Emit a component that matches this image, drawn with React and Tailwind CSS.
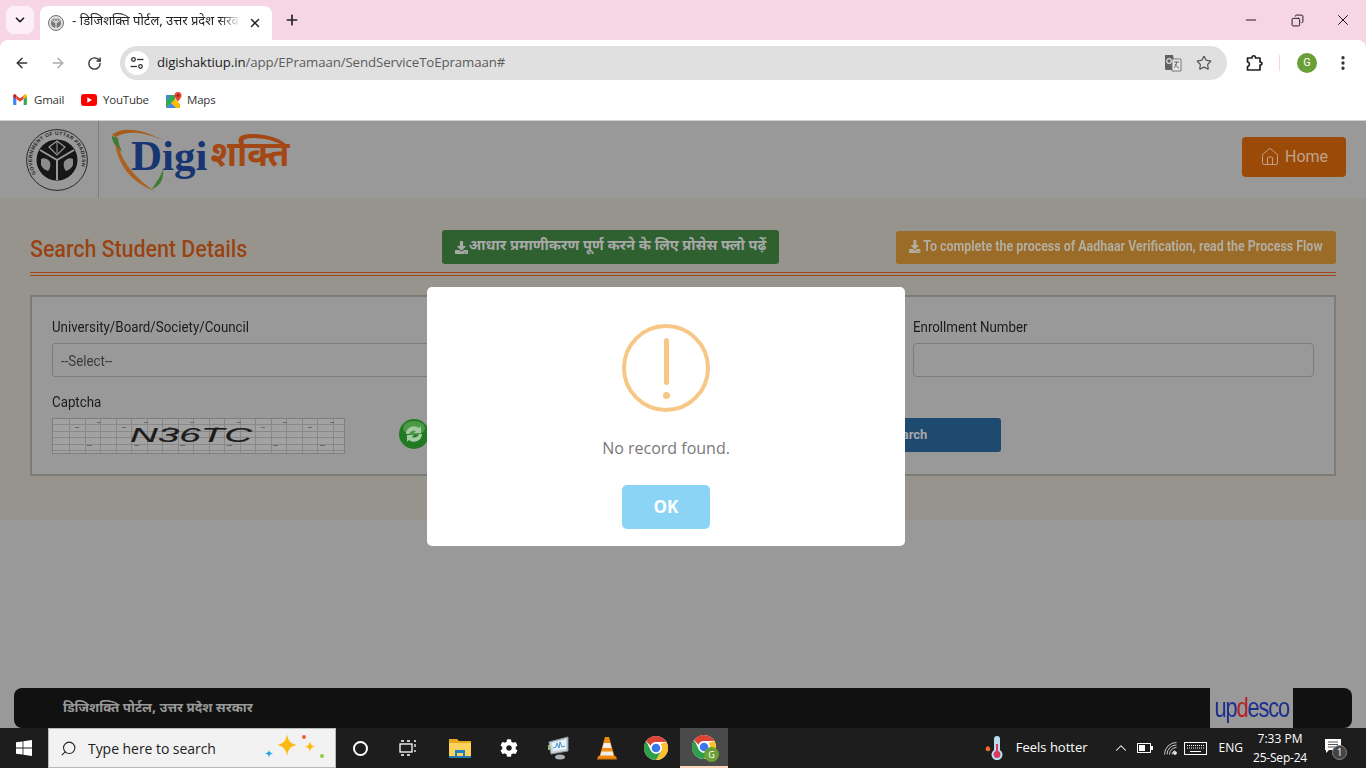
// App.jsx
import {
  ChevronDown, X, Plus, Minus, ArrowLeft, ArrowRight, RotateCw, Star,
  EllipsisVertical, Copy, Search, ChevronUp, House,
} from "lucide-react";
import { FaCog, FaDownload } from "react-icons/fa";

const HINDI = "font-['Noto_Sans_Devanagari','Lohit_Devanagari','Noto_Sans',sans-serif]";

function GmailIcon() {
  return (
    <svg width="14" height="11" viewBox="0 0 15 12">
      <path d="M0 2v9a1 1 0 0 0 1 1h2.500V5.500z" fill="#4285f4" />
      <path d="M15 2v9a1 1 0 0 1-1 1h-2.500V5.500z" fill="#34a853" />
      <path d="M3.500 5.500 7.500 8.500l4-3V1.500l-4 3-4-3z" fill="#ea4335" />
      <path d="M0 2c0-1.500 1.800-2.300 3-1.400l.5.400v4.500L0 3z" fill="#c5221f" />
      <path d="M15 2c0-1.500-1.800-2.300-3-1.400l-.5.400v4.500L15 3z" fill="#fbbc04" />
    </svg>
  );
}

function YoutubeIcon() {
  return (
    <svg width="16" height="12" viewBox="0 0 16 12">
      <rect width="16" height="12" rx="3" fill="#f00" />
      <path d="M6.300 3.200v5.600L11 6z" fill="#fff" />
    </svg>
  );
}

function MapsIcon() {
  return (
    <svg width="16" height="16" viewBox="0 0 16 16">
      <path d="M0 3h9v13H0z" fill="#34a853" />
      <path d="M0 16 9 7l5 5v4z" fill="#fbbc04" />
      <path d="M0 16 5 11l5 5z" fill="#4285f4" />
      <path d="M0 3h6L0 9z" fill="#4285f4" opacity=".7" />
      <path d="M12 0a3.500 3.500 0 0 0-3.500 3.500C8.500 6 12 9.500 12 9.500s3.500-3.500 3.500-6A3.500 3.500 0 0 0 12 0z" fill="#ea4335" />
      <circle cx="12" cy="3.500" r="1.200" fill="#8c1c13" />
    </svg>
  );
}

function ChromeIcon({ size = 24 }) {
  return (
    <svg width={size} height={size} viewBox="0 0 24 24">
      <circle cx="12" cy="12" r="12" fill="#fff" />
      <path d="M12 0a12 12 0 0 1 10.400 6H12a6 6 0 0 0-5.600 3.800L2.200 5A12 12 0 0 1 12 0z" fill="#db4437" />
      <path d="M22.400 6A12 12 0 0 1 12 24l5.200-9A6 6 0 0 0 16.400 8z M22.400 6H12" fill="#fbc02d" />
      <path d="M2.200 5A12 12 0 0 0 12 24l5.200-9a6 6 0 0 1-10.400-.4z" fill="#2e9e49" />
      <circle cx="12" cy="12" r="5.400" fill="#fff" />
      <circle cx="12" cy="12" r="4.300" fill="#3b78e7" />
    </svg>
  );
}

function TuneIcon() {
  return (
    <svg width="14" height="14" viewBox="0 0 14 14" fill="none" stroke="#333" strokeWidth="1.300">
      <circle cx="3.500" cy="3.500" r="1.800" />
      <path d="M7 3.500h6.500" />
      <circle cx="10.500" cy="10.500" r="1.800" />
      <path d="M.5 10.500H7" />
    </svg>
  );
}

function TranslateIcon() {
  return (
    <svg width="18" height="18" viewBox="0 0 18 18">
      <path d="M1 1h8l3 15H2.500a1.500 1.500 0 0 1-1.500-1.500z" fill="#5f6368" />
      <path d="M8 5h8.500a.5.500 0 0 1 .5.500V17H8z" fill="#e8e8e8" stroke="#777" />
      <circle cx="5" cy="7" r="2.300" fill="none" stroke="#e0e0e0" strokeWidth="1.200" />
      <path d="M10 8h5M12.500 8c0 3-1.500 5-2.500 6M11 10c1 2 2.500 3.500 4 4" stroke="#666" fill="none" />
    </svg>
  );
}

function ExtensionIcon() {
  return (
    <svg width="18" height="18" viewBox="0 0 18 18" fill="none" stroke="#222" strokeWidth="1.700" strokeLinejoin="round">
      <path d="M1.500 4H6c0-3 3.500-3 3.500 0H14v4c2.500 0 2.500 3 0 3v5H1.500v-3.500C4 12.500 4 8 1.500 8z" />
    </svg>
  );
}

function GovSeal() {
  return (
    <svg width="62" height="62" viewBox="0 0 62 62">
      <defs>
        <path id="sealArc" d="M10 44.600A25 25 0 1 1 52 44.600" />
      </defs>
      <circle cx="31" cy="31" r="30.400" fill="none" stroke="#1c1c1c" strokeWidth="0.900" />
      <text fontFamily="Liberation Sans" fontSize="5" fontWeight="700" fill="#222" letterSpacing=".4">
        <textPath href="#sealArc">GOVERNMENT OF UTTAR PRADESH</textPath>
      </text>
      <circle cx="31" cy="31" r="20.500" fill="#171717" />
      <path d="M31 31V51M31 31 14 21M31 31l17-10" stroke="#999" strokeWidth="2" />
      <path d="M23 18 31 12l8 6-8 8z" fill="none" stroke="#999" strokeWidth="1.200" />
      <path d="M31 13v11" stroke="#999" />
      <path d="M15 30c3-2 7 0 9 3 1 3 0 7-2 9-3-1-6-3-7-6z" fill="#8c8c8c" />
      <path d="M47 30c-3-2-7 0-9 3-1 3 0 7 2 9 3-1 6-3 7-6z" fill="#8c8c8c" />
    </svg>
  );
}

function Favicon() {
  return (
    <svg width="16" height="16" viewBox="0 0 16 16">
      <circle cx="8" cy="8" r="7.500" fill="#ddd" stroke="#777" />
      <circle cx="8" cy="8" r="5" fill="#777" />
      <path d="M8 8v5M8 8 4 5.500M8 8l4-2.500M6 4.500 8 3l2 1.500L8 7z" stroke="#eee" fill="none" />
    </svg>
  );
}

function DigiLogo() {
  return (
    <div className="relative flex items-start w-[182px] h-[65px] pl-[21px] leading-none">
      {/* tricolour swoosh round the wordmark */}
      <svg className="absolute left-0 top-0" width="80" height="65" viewBox="0 0 80 65">
        <path d="M2 8C12-1 34 2 52 13 36 5 16 3 6 10z" fill="#a85c1c" />
        <path d="M2 9c0 5 2 9 10 16-2-5-4-10-4-14z" fill="#3e7c32" />
        <path d="M5 17c3 18 14 38 40 47C28 54 13 36 9 21z" fill="#ab611f" />
        <path d="M42 62c8-3 12-9 11-20-2 7-6 12-11 20z" fill="#3e7c32" />
      </svg>
      <span className="relative font-['Liberation_Serif',serif] font-bold text-[43px] text-[#163572] mt-[7px]">Digi</span>
      <span className={`relative ${HINDI} font-bold text-[35px] text-[#a34815] ml-[3px] mt-[13px] whitespace-nowrap`}>शक्ति</span>
    </div>
  );
}

function CaptchaImage() {
  const specks = [15, 62, 108, 155, 201, 248];
  const rows = [6.5, 13.5, 19.5, 26.5, 32.5];
  const cols = [];
  for (let i = 0; i < 18; i++) cols.push(Math.round(17 + i * 15.5) + 0.5);
  return (
    <svg width="293" height="36" viewBox="0 0 293 36" shapeRendering="crispEdges">
      <rect width="293" height="36" fill="#a2a2a2" />
      {rows.map((y) => (
        <path key={y} d={`M0 ${y}H293`} stroke="#888888" />
      ))}
      {cols.map((x) => (
        <path key={x} d={`M${x} 0V36`} stroke="#888888" />
      ))}
      <rect x=".5" y=".5" width="292" height="35" fill="none" stroke="#7f7f7f" />
      {specks.map((x) => (
        <path key={x} d={`M${x + 8} 9h4M${x + 20} 27h5M${x + 30} 4h4`} stroke="#6a6a6a" />
      ))}
      <text x="78" y="24" shapeRendering="auto" fontFamily="Liberation Sans" fontStyle="italic" fontSize="20" textLength="122" lengthAdjust="spacingAndGlyphs" fill="#1b1b1b" stroke="#1b1b1b" strokeWidth=".15">N36TC</text>
    </svg>
  );
}

function RefreshBall() {
  return (
    <svg width="30" height="30" viewBox="0 0 30 30">
      <circle cx="15" cy="15" r="15" fill="#1f7a22" />
      <ellipse cx="15" cy="9" rx="11" ry="7" fill="#6aae63" opacity=".6" />
      <path d="M7 15a8 8 0 0 1 13-6l2-2v7h-7l2-2a5 5 0 0 0-7 3z" fill="#a5c9a2" />
      <path d="M23 15a8 8 0 0 1-13 6l-2 2v-7h7l-2 2a5 5 0 0 0 7-3z" fill="#a5c9a2" />
    </svg>
  );
}

function WindowsLogo() {
  return (
    <svg width="16" height="16" viewBox="0 0 16 16" fill="#fff">
      <path d="M0 2.300 6.600 1.400V7.600H0zM7.400 1.300 16 0V7.600H7.400zM0 8.400H6.600V14.600L0 13.700zM7.400 8.400H16V16L7.400 14.700z" />
    </svg>
  );
}

function FolderIcon() {
  return (
    <svg width="22" height="20" viewBox="0 0 22 20">
      <path d="M0 1h8l2 2h12v15H0z" fill="#e8a91f" />
      <path d="M0 5h22v13H0z" fill="#fbd25c" />
      <path d="M6 12h10v6h-2v-3H8v3H6z" fill="#1f7fc4" />
      <path d="M0 18h22v2H0z" fill="#2a90d4" opacity=".8" />
    </svg>
  );
}

function PerfMonIcon() {
  return (
    <svg width="24" height="24" viewBox="0 0 24 24">
      <path d="M2 6 21 1v14L4 18z" fill="#c9d4db" stroke="#8a959c" />
      <path d="M5 7 19 3.500v9.500L6 15z" fill="#e9f4fa" />
      <path d="M6 12l3-1 1-4 2 5 1-6 2 5 3-1" fill="none" stroke="#3a86c8" strokeWidth=".9" />
      <ellipse cx="13" cy="21" rx="5" ry="2.500" fill="#aab0b3" />
      <path d="M1 9h2v5H1z" fill="#8bbf6a" />
    </svg>
  );
}

function VlcIcon() {
  return (
    <svg width="20" height="24" viewBox="0 0 20 24">
      <path d="M1 20h18l1 3.500H0z" fill="#e07b0a" />
      <path d="M8 1h4l6 21H2z" fill="#f28c0f" />
      <path d="M6.800 7h6.400l1.300 5H5.500zM4.500 15.500h11l1 4h-13z" fill="#eee" />
    </svg>
  );
}

function ThermoIcon() {
  return (
    <svg width="20" height="24" viewBox="0 0 20 24">
      <path d="M4 10c-2 1-3 2.500-2 4.300 1 1.400 3 1.400 4 0 .7-1.300 0-2.300-.6-3z" fill="#f2682a" />
      <path d="M10 3a3 3 0 0 1 6 0v11a5.500 5.500 0 1 1-6 0z" fill="#bcdcf2" />
      <path d="M12 8h2v8h-2z" fill="#d73a5c" />
      <circle cx="13" cy="18.500" r="3.400" fill="#d73a5c" />
    </svg>
  );
}

function Sparkles() {
  return (
    <svg width="62" height="32" viewBox="0 0 62 32">
      <path d="M24 2c1 7 4 10 10 11-6 1-9 4-10 11-1-7-4-10-10-11 6-1 9-4 10-11z" fill="#fdb913" />
      <path d="M47 9c.5 3.500 2 5 5.500 5.500C49 15 47.500 16.500 47 20c-.5-3.500-2-5-5.500-5.500C45 14 46.500 12.500 47 9z" fill="#fdb913" />
      <path d="M6 18c.3 2 1.200 3 4 3.500-2.800.5-3.700 1.500-4 4-.3-2.500-1.200-3.500-4-4 2.800-.5 3.700-1.500 4-3.500z" fill="#1ea7ec" />
      <circle cx="41" cy="5" r="2" fill="#f0632a" />
      <circle cx="59" cy="24" r="2" fill="#8fce3f" />
    </svg>
  );
}

function SecondaryChrome() {
  return (
    <div className="relative w-[24px] h-[24px]">
      <ChromeIcon size={24} />
      <span className="absolute -right-[3px] -bottom-[3px] w-[15px] h-[15px] rounded-full bg-[#6a9f37] text-[9px] leading-[15px] text-center text-white">G</span>
    </div>
  );
}

function TabStrip() {
  return (
    <div className="flex h-[40px] bg-[#f6d5e5] pt-[6px] pl-[6px]">
      <button className="flex items-center justify-center w-[28px] h-[28px] rounded-lg bg-[#fcf0f6]">
        <ChevronDown size={14} strokeWidth={3} color="#222" />
      </button>
      <div className="ml-[6px] flex items-center w-[232px] h-[34px] rounded-t-lg bg-white pl-[8px] pr-[8px]">
        <Favicon />
        <span className={`ml-[8px] w-[168px] -mt-[2px] overflow-hidden whitespace-nowrap text-[13px] text-[#222] [mask-image:linear-gradient(to_right,black_88%,transparent)] ${HINDI}`}>- डिजिशक्ति पोर्टल, उत्तर प्रदेश सरकार</span>
        <X size={14} strokeWidth={2.500} color="#222" className="ml-[8px]" />
      </div>
      <Plus size={16} strokeWidth={2.500} color="#222" className="ml-[12px] mt-[6px]" />
      <div className="ml-auto flex items-start text-black">
        <Minus size={16} strokeWidth={1.300} className="mt-[6px] mr-[32px]" />
        <Copy size={13} strokeWidth={1.600} className="mt-[8px] mr-[30px] -scale-x-100" />
        <X size={18} strokeWidth={1.200} className="mt-[5px] mr-[14px]" />
      </div>
    </div>
  );
}

function Toolbar() {
  return (
    <div className="bg-[#f6d5e5]">
      <div className="flex items-center h-[46px] rounded-t-lg bg-white pl-[14px] pr-[14px]">
        <ArrowLeft size={16} strokeWidth={2.200} color="#333" />
        <ArrowRight size={16} strokeWidth={2.200} color="#aaa" className="ml-[20px]" />
        <RotateCw size={15} strokeWidth={2.200} color="#333" className="ml-[21px]" />
        <div className="ml-[18px] flex items-center w-[1108px] h-[34px] rounded-full bg-[#e0e0e0] pl-[5px] pr-[15px]">
          <span className="flex items-center justify-center w-[24px] h-[24px] rounded-full bg-white"><TuneIcon /></span>
          <span className="ml-[8px] text-[13.25px] font-['Open_Sans',sans-serif] text-[#222] tracking-[-0.1px]">
            digishaktiup.in<span className="text-[#5c5c5c]">/app/EPramaan/SendServiceToEpramaan#</span>
          </span>
          <span className="ml-auto"><TranslateIcon /></span>
          <Star size={16} strokeWidth={1.800} color="#555" className="ml-[14px]" />
        </div>
        <span className="ml-[19px]"><ExtensionIcon /></span>
        <span className="ml-[15px] w-[1px] h-[16px] bg-[#f6d5e5]" />
        <span className="ml-[17px] flex items-center justify-center w-[20px] h-[20px] rounded-full bg-[#6a9f37] text-[11px] text-white">G</span>
        <EllipsisVertical size={18} strokeWidth={2.400} color="#333" className="ml-[17px]" />
      </div>
    </div>
  );
}

function Bookmarks() {
  return (
    <div className="flex items-center h-[35px] bg-white border-b border-[#d0d0d0] pl-[13px] pb-[7px] text-[11.5px] tracking-[-0.2px] text-[#333] font-['Open_Sans',sans-serif]">
      <GmailIcon />
      <span className="ml-[7px] w-[30px]">Gmail</span>
      <span className="ml-[17px]"><YoutubeIcon /></span>
      <span className="ml-[6px] w-[46px]">YouTube</span>
      <span className="ml-[17px]"><MapsIcon /></span>
      <span className="ml-[5px]">Maps</span>
    </div>
  );
}

function SearchForm() {
  return (
    <div className="h-[322px] bg-[#96948c] px-[30px] pt-[32px]">
      <div className="flex items-center h-[34px]">
        <h2 className="w-[412px] pt-[3px] font-medium text-[24px] text-[#994214] whitespace-nowrap">
          <span className="inline-block origin-left scale-x-[0.89]">Search Student Details</span>
        </h2>
        <button className={`flex items-center justify-center gap-[1px] w-[337px] h-[34px] rounded-[3px] bg-[#2f6030] text-[#a8a8a8] text-[14.6px] font-bold whitespace-nowrap ${HINDI}`}>
          <FaDownload size={13} />
          आधार प्रमाणीकरण पूर्ण करने के लिए प्रोसेस फ्लो पढ़ें
        </button>
        <button className="flex items-center justify-center ml-[117px] w-[440px] h-[33px] pb-[1px] rounded-[3px] bg-[#9a6c28] text-[#b3aca0] text-[14px] font-bold whitespace-nowrap overflow-hidden">
          <span className="inline-flex items-center gap-[3px] scale-x-[0.888]">
            <FaDownload size={13} />
            To complete the process of Aadhaar Verification, read the Process Flow
          </span>
        </button>
      </div>
      <div className="mt-[8px] h-[4px] border-y border-[#a34815]" />
      <div className="mt-[19px] h-[181px] border-2 border-[#7c7c78] bg-[#999999] px-[20px] pt-[20px] text-[#1b1b1b]">
        <div className="grid grid-cols-3 gap-x-[30px] w-[1262px]">
          <label className="block">
            <span className="block h-[20px] text-[14px] leading-[20px] whitespace-nowrap"><span className="inline-block origin-left scale-x-[0.95]">University/Board/Society/Council</span></span>
            <div className="mt-[6px] h-[34px] border border-[#7c7c7c] rounded-[3px] px-[8px] pt-[1px] text-[14px] leading-[32px] text-[#3a3a3a]"><span className="inline-block origin-left scale-x-[0.95]">--Select--</span></div>
          </label>
          <div />
          <label className="block">
            <span className="block h-[20px] text-[14px] leading-[20px] whitespace-nowrap"><span className="inline-block origin-left scale-x-[0.95]">Enrollment Number</span></span>
            <div className="mt-[6px] h-[34px] border border-[#7c7c7c] rounded-[4px]" />
          </label>
        </div>
        <div className="mt-[15px] h-[20px] text-[14px] leading-[20px]"><span className="inline-block origin-left scale-x-[0.95]">Captcha</span></div>
        <div className="mt-[6px] flex items-start">
          <CaptchaImage />
          <span className="ml-[54px] mt-[1px]"><RefreshBall /></span>
          <button className="ml-[384px] w-[188px] h-[34px] rounded-[3px] bg-[#1f4a70] text-[#a8a8a8] text-[13px] font-bold">Search</button>
        </div>
      </div>
    </div>
  );
}

function PageFooter() {
  return (
    <div className={`flex items-center h-[40px] mx-[14px] rounded-lg bg-[#111111] pl-[49px] text-[13.4px] font-bold text-[#999999] ${HINDI}`}>
      <span className="mt-[3px]">डिजिशक्ति पोर्टल, उत्तर प्रदेश सरकार</span>
      <div className="ml-auto mr-[59px] flex items-center justify-center w-[83px] h-[41px] -mt-[1px] bg-[#999999] overflow-hidden font-['Liberation_Sans',sans-serif] font-normal text-[28px] text-[#1c2f8c]">
        <span className="inline-block scale-x-[0.78] tracking-[-1.500px] whitespace-nowrap">
          up<span className="text-[#b81f2a]">d</span>esco
        </span>
      </div>
    </div>
  );
}

function SwalModal() {
  return (
    <div className="absolute inset-0 flex justify-center pt-[166px] pr-[34px]">
      <div className="flex flex-col items-center w-[478px] h-[259px] rounded-[5px] bg-white font-['Open_Sans',sans-serif]">
        <div className="relative mt-[37px] w-[88px] h-[88px] rounded-full border-4 border-[#f8c786]">
          <span className="absolute left-[38px] top-[10px] w-[5px] h-[47px] rounded-full bg-[#f8c786]" />
          <span className="absolute left-[37px] top-[64px] w-[7px] h-[7px] rounded-full bg-[#f8c786]" />
        </div>
        <p className="mt-[24px] text-[16px] leading-[24px] text-[#797979]">No record found.</p>
        <button className="mt-[25px] w-[88px] h-[44px] rounded-[5px] bg-[#8cd4f6] text-[17px] font-bold text-white">OK</button>
      </div>
    </div>
  );
}

function TaskIcon({ children, active, className = "" }) {
  return (
    <div className={`flex items-center justify-center w-[48px] h-[40px] ${active ? "bg-[#4a4a4a] border-b-2 border-[#fbd3b8]" : ""} ${className}`}>
      {children}
    </div>
  );
}

function Taskbar() {
  return (
    <div className="flex items-center h-[40px] bg-[#1d1d1d] text-white font-['Open_Sans',sans-serif]">
      <div className="flex items-center justify-center w-[48px] h-[40px]"><WindowsLogo /></div>
      <div className="flex items-center w-[288px] h-[40px] bg-[#f2f2f2] border border-[#b8b8b8] pl-[11px] text-[#222]">
        <Search size={17} strokeWidth={1.500} className="-scale-x-100" />
        <span className="ml-[11px] text-[14px] tracking-[-0.05px]">Type here to search</span>
        <span className="ml-auto mr-[10px]"><Sparkles /></span>
      </div>
      <div className="flex items-center justify-center w-[48px]">
        <span className="w-[15px] h-[15px] rounded-full border-2 border-white" />
      </div>
      <TaskIcon>
        <svg width="18" height="16" viewBox="0 0 18 16" fill="none" stroke="#fff" strokeWidth="1.300">
          <rect x="1" y="4" width="12" height="8" />
          <path d="M2 1h3M8 1h3M15 1h2M16 4v3M16 10v2M2 15h3M8 15h3" />
        </svg>
      </TaskIcon>
      <TaskIcon className="ml-[4px]"><FolderIcon /></TaskIcon>
      <TaskIcon className="ml-[1px]"><FaCog size={18} /></TaskIcon>
      <TaskIcon className="ml-[2px]"><PerfMonIcon /></TaskIcon>
      <TaskIcon><VlcIcon /></TaskIcon>
      <TaskIcon className="ml-[1px]"><ChromeIcon /></TaskIcon>
      <TaskIcon active><SecondaryChrome /></TaskIcon>
      <div className="ml-auto flex items-center h-[40px] pr-[21px]">
        <ThermoIcon />
        <span className="ml-[12px] text-[13px] whitespace-nowrap">Feels hotter</span>
        <ChevronUp size={18} strokeWidth={1.400} className="ml-[24px]" />
        <svg className="ml-[7px]" width="16" height="10" viewBox="0 0 16 10" fill="none">
          <rect x=".5" y=".5" width="13" height="9" stroke="#fff" />
          <rect x="2" y="2" width="6" height="6" fill="#fff" />
          <rect x="14" y="3" width="2" height="4" fill="#fff" />
        </svg>
        <svg className="ml-[11px]" width="13" height="13" viewBox="0 0 13 13" fill="none" stroke="#ddd" strokeWidth=".9">
          <path d="M.5 12.500A12 12 0 0 1 12.500.5M3 12.500A9.500 9.500 0 0 1 12.500 3M5.500 12.500a7 7 0 0 1 7-7M8 12.500a4.500 4.500 0 0 1 3-4" />
          <circle cx="11" cy="11" r="1.500" fill="#ddd" />
        </svg>
        <svg className="ml-[7px]" width="23" height="13" viewBox="0 0 23 13" fill="none" stroke="#fff">
          <rect x=".5" y=".5" width="22" height="12" />
          <path d="M3 3.500h17M3 6h17" strokeDasharray="1 1" />
          <path d="M6 9.500h11" />
        </svg>
        <span className="ml-[12px] text-[12px]">ENG</span>
        <div className="ml-[4px] w-[66px] text-center text-[12px] leading-[19px]">
          <div>7:33 PM</div>
          <div className="tracking-[-0.2px]">25-Sep-24</div>
        </div>
        <div className="relative ml-[12px] w-[20px] h-[24px]">
          <svg width="16" height="14" viewBox="0 0 16 14" className="mt-[3px]">
            <path d="M0 0h16v11H4l-3 3v-3H0z" fill="#fff" />
            <path d="M3 3h10M3 5.500h10M3 8h7" stroke="#555" />
          </svg>
          <span className="absolute left-[7px] top-[9px] w-[15px] h-[15px] rounded-full border border-[#888] bg-[#444] text-[10px] leading-[13px] text-center">1</span>
        </div>
      </div>
    </div>
  );
}

export default function App() {
  return (
    <div className="flex flex-col w-[1366px] h-[768px] overflow-hidden font-['Roboto',sans-serif]">
      <TabStrip />
      <Toolbar />
      <Bookmarks />
      {/* page content, already dimmed behind the alert */}
      <div className="relative flex flex-col flex-1 min-h-0 bg-[#999999]">
        <div className="flex items-center h-[77px] pl-[26px] shrink-0">
          <GovSeal />
          <span className="ml-[10px] w-[1px] h-[77px] bg-[#7d7d7d]" />
          <span className="ml-[11px]"><DigiLogo /></span>
          <button className="ml-auto mr-[20px] -mt-[6px] flex items-center justify-center gap-[5px] w-[104px] h-[40px] rounded-[4px] bg-[#9c4a08] text-[16px] text-[#bfa38f]">
            <House size={20} strokeWidth={1.200} />
            Home
          </button>
        </div>
        <SearchForm />
        <div className="mt-auto">
          <PageFooter />
        </div>
        <SwalModal />
      </div>
      <Taskbar />
    </div>
  );
}
